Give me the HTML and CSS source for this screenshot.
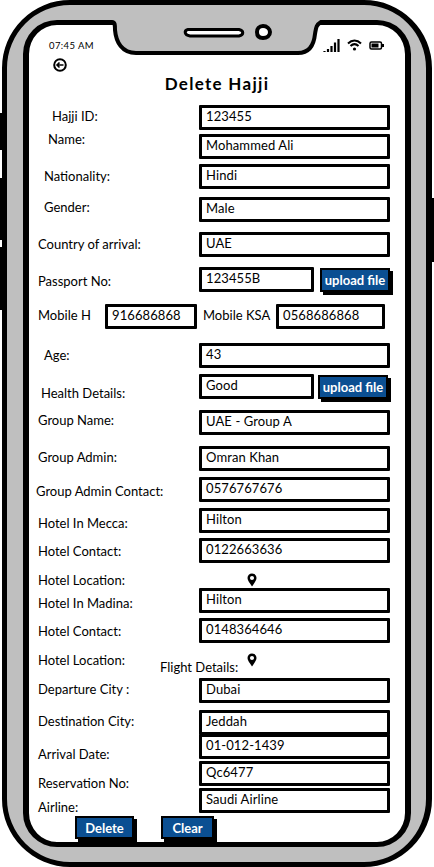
FILE: index.html
```html
<!DOCTYPE html>
<html>
<head>
<meta charset="utf-8" />
<title>Delete Hajji</title>
<link rel="stylesheet" href="styles.css">
</head>
<body>
	<div class="phone">
		<div class="sideBtn left1"></div>
		<div class="sideBtn left2"></div>
		<div class="sideBtn left3"></div>
		<div class="sideBtn right1"></div>
		<div class="screen">
			<svg class="notch" width="216" height="40" viewBox="0 0 216 40">
				<path d="M0 -3 H209 V0 C204 3 204 6 203 12 C202 22 198 31 186 31 H24 C10 31 4 20 3 8 C3 3 3 0 0 0 Z" fill="#bfbfbf"/>
				<path d="M-4 0 H0 C3 0 3 3 3 8 C4 20 10 31 24 31 H186 C198 31 202 22 203 12 C204 6 204 3 209 0 H214" fill="none" stroke="#000" stroke-width="4"/>
				<path d="M76 7.500 H127 C132 8.500 132 13 127 14 H78 C72 13 72 8.500 76 7.500 Z" fill="#fff" stroke="#000" stroke-width="3"/>
				<path d="M151 4 C155 4 158 7 158 10 C158 14 155 16 151 16 C147 16 145 14 145 10 C145 7 147 4 151 4 Z" fill="#fff" stroke="#000" stroke-width="4"/>
			</svg>

			<div class="statusBar">
				<span class="time">07:45 AM</span>
				<div class="statusIcons">
					<svg width="17" height="15" viewBox="0 0 17 15">
						<path d="M1.500 13V14M5 11V14M8.500 8V14M12 4.500V14M15.500 1V14" stroke="#000" stroke-width="2.200" fill="none"/>
					</svg>
					<svg width="15" height="12" viewBox="0 0 15 12">
						<path d="M1 4.500C5 .5 10 .5 14 4.500M3.500 7C6 4.500 9 4.500 11.500 7" stroke="#000" stroke-width="2" fill="none"/>
						<circle cx="7.500" cy="10" r="1.600"/>
					</svg>
					<svg width="15" height="9" viewBox="0 0 15 9">
						<rect x="1" y="1" width="11.500" height="7" rx="1.500" fill="#fff" stroke="#000" stroke-width="1.500"/>
						<rect x="2.500" y="2.500" width="7" height="4" />
						<rect x="13" y="3" width="2" height="3" />
					</svg>
				</div>
			</div>

			<svg class="backIcon" width="14" height="14" viewBox="0 0 14 14">
				<circle cx="7" cy="7" r="5.800" fill="none" stroke="#000" stroke-width="2"/>
				<path d="M10.500 7H4M6.500 4.500L4 7L6.500 9.500" fill="none" stroke="#000" stroke-width="1.600"/>
			</svg>

			<h1 class="title">Delete Hajji</h1>

			<div class="row"><label class="pl23 up2">Hajji ID:</label><div class="field">123455</div></div>
			<div class="row mt4"><label class="pl19 up14">Name:</label><div class="field">Mohammed Ali</div></div>
			<div class="row mt5"><label class="pl15">Nationality:</label><div class="field">Hindi</div></div>
			<div class="row mt8"><label class="pl15 up4">Gender:</label><div class="field">Male</div></div>
			<div class="row mt10"><label class="pl9">Country of arrival:</label><div class="field">UAE</div></div>
			<div class="row mt10">
				<label class="pl9 down4">Passport No:</label>
				<div class="field short">123455B</div>
				<div class="btn upload">upload file</div>
			</div>
			<div class="row mt12">
				<label class="pl9 mobile up2">Mobile H</label>
				<div class="field mobileH">916686868</div>
				<label class="ksa up2">Mobile KSA</label>
				<div class="field mobileK">0568686868</div>
			</div>
			<div class="row mt14"><label class="pl15">Age:</label><div class="field">43</div></div>
			<div class="row mt6">
				<label class="pl12 down14">Health Details:</label>
				<div class="field short">Good</div>
				<div class="btn upload near">upload file</div>
			</div>
			<div class="row mt11"><label class="pl9 up4">Group Name:</label><div class="field">UAE - Group A</div></div>
			<div class="row mt11"><label class="pl9 up2">Group Admin:</label><div class="field">Omran Khan</div></div>
			<div class="row mt6"><label class="pl7 down4">Group Admin Contact:</label><div class="field">0576767676</div></div>
			<div class="row mt6"><label class="pl9 down6">Hotel In Mecca:</label><div class="field">Hilton</div></div>
			<div class="row mt5"><label class="pl9 down2">Hotel Contact:</label><div class="field">0122663636</div></div>
			<div class="row">
				<label class="pl9 down10">Hotel Location:</label>
				<svg class="pin" width="10" height="14" viewBox="0 0 10 14"><path d="M5 13.500C2.500 9.500 .5 7.500 .5 5C.5 2.300 2.500 .5 5 .5C7.500 .5 9.500 2.300 9.500 5C9.500 7.500 7.500 9.500 5 13.500ZM5 3C3.800 3 3 3.900 3 5C3 6.100 3.800 7 5 7C6.200 7 7 6.100 7 5C7 3.900 6.200 3 5 3Z" fill-rule="evenodd"/></svg>
			</div>
			<div class="row"><label class="pl9 down6">Hotel In Madina:</label><div class="field">Hilton</div></div>
			<div class="row mt5"><label class="pl9 down2">Hotel Contact:</label><div class="field">0148364646</div></div>
			<div class="row">
				<label class="pl9 down10">Hotel Location:</label>
				<span class="flightHead">Flight Details:</span>
				<svg class="pin late" width="10" height="14" viewBox="0 0 10 14"><path d="M5 13.500C2.500 9.500 .5 7.500 .5 5C.5 2.300 2.500 .5 5 .5C7.500 .5 9.500 2.300 9.500 5C9.500 7.500 7.500 9.500 5 13.500ZM5 3C3.800 3 3 3.900 3 5C3 6.100 3.800 7 5 7C6.200 7 7 6.100 7 5C7 3.900 6.200 3 5 3Z" fill-rule="evenodd"/></svg>
			</div>
			<div class="row mt10"><label class="pl9 up2">Departure City :</label><div class="field">Dubai</div></div>
			<div class="row mt7"><label class="pl9 up2">Destination City:</label><div class="field">Jeddah</div></div>
			<div class="row back1"><label class="pl9 down16">Arrival Date:</label><div class="field">01-012-1439</div></div>
			<div class="row mt2"><label class="pl9 down20">Reservation No:</label><div class="field">Qc6477</div></div>
			<div class="row mt2"><label class="pl9 down14">Airline:</label><div class="field">Saudi Airline</div></div>

			<div class="actions">
				<div class="btn del">Delete</div>
				<div class="btn clr">Clear</div>
			</div>
		</div>
	</div>
</body>
</html>
```

FILE: styles.css
```css
*{ padding:0; margin:0; box-sizing:border-box;}

body{ width:434px; height:867px; overflow:hidden; background:#FFF; font-family:"Lato","Open Sans",sans-serif; font-size:13px; color:#000;}

/* phone frame */
.phone{ position:relative; width:430px; height:867px; margin-left:2px; padding:15px 15px 15px 16px; background:#BFBFBF; border:solid #000; border-width:5px 6px 5px 5px; border-radius:68px;}
.sideBtn{ position:absolute; width:4px; background:#000;}
.left1{ left:-7px; top:108px; height:37px;}
.left2{ left:-7px; top:173px; height:62px;}
.left3{ left:-7px; top:242px; height:63px;}
.right1{ right:-8px; top:193px; height:64px;}
.screen{ position:relative; height:827px; padding-top:13px; background:#FFF; border:solid #000; border-width:5px 6px; border-radius:34px;}
.notch{ position:absolute; left:83px; top:-3px; overflow:visible;}

/* status bar */
.statusBar{ display:flex; justify-content:space-between; align-items:center; height:14px; padding:0 21px 0 20px;}
.time{ font-size:9.5px; letter-spacing:.4px;}
.statusIcons{ display:flex; align-items:center; gap:7px;}

.backIcon{ display:block; margin:6px 0 0 24px;}
.title{ margin-top:2px; height:20px; font-size:17px; line-height:20px; letter-spacing:1.300px; text-align:center;}

/* form rows */
.row{ display:flex; align-items:center; height:25px;}
.title + .row{ margin-top:11px;}
label{ width:170px; flex-shrink:0; padding-bottom:2px;}
.field{ width:191px; height:25px; padding-left:4px; line-height:17px; letter-spacing:.1px; background:#FFF; border:3px solid #000; border-radius:1px;}
.field.short{ width:115px;}

.btn{ flex-shrink:0; height:24px; line-height:20px; color:#FFF; font-weight:bold; text-align:center; background:#0B4F92; border:2px solid #000; box-shadow:3px 3px 0 #000;}
.upload{ width:70px; margin-left:6px;}
.near{ margin-left:4px;}
.mobile{ width:76px;}
.mobileH{ width:92px;}
.ksa{ width:73px; margin-left:6px;}
.mobileK{ width:109px;}

.pin{ margin-left:48px; margin-top:9px;}
.pin.late{ margin-left:87px;}
.flightHead{ width:0; margin-left:-39px; margin-top:23px; white-space:nowrap;}

.actions{ display:flex; padding-left:46px; gap:27px; margin-top:3px;}
.del{ width:59px; height:23px;}
.clr{ width:53px; height:23px;}

/* gaps between rows */
.back1{ margin-top:-1px;}
.mt2{ margin-top:2px;}
.mt4{ margin-top:4px;}
.mt5{ margin-top:5px;}
.mt6{ margin-top:6px;}
.mt7{ margin-top:7px;}
.mt8{ margin-top:8px;}
.mt10{ margin-top:10px;}
.mt11{ margin-top:11px;}
.mt12{ margin-top:12px;}
.mt14{ margin-top:14px;}

/* label start */
.pl7{ padding-left:7px;}
.pl9{ padding-left:9px;}
.pl12{ padding-left:12px;}
.pl15{ padding-left:15px;}
.pl19{ padding-left:19px;}
.pl23{ padding-left:23px;}

/* labels do not line up with their boxes in the mockup */
.up2{ margin-bottom:2px;}
.up4{ margin-bottom:4px;}
.up14{ margin-bottom:14px;}
.down2{ margin-top:2px;}
.down4{ margin-top:4px;}
.down6{ margin-top:6px;}
.down10{ margin-top:10px;}
.down14{ margin-top:14px;}
.down16{ margin-top:16px;}
.down20{ margin-top:20px;}
```
